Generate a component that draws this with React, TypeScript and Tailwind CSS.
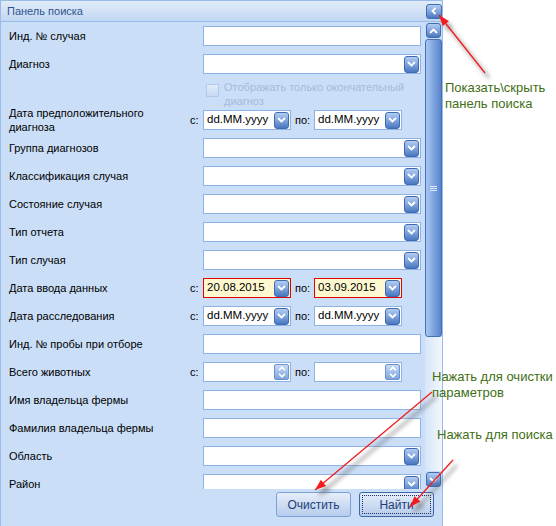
import type { ReactNode } from 'react';

const ChevronDown = () => (
  <svg width="9" height="6" viewBox="0 0 9 6">
    <polyline points="1,1 4.5,4.5 8,1" fill="none" stroke="white" strokeWidth="1.8" />
  </svg>
);

const ChevronUp = () => (
  <svg width="9" height="6" viewBox="0 0 9 6">
    <polyline points="1,5 4.5,1.5 8,5" fill="none" stroke="white" strokeWidth="1.8" />
  </svg>
);

function BlueBtn({ children, h = 'h-[17px]' }: { children: ReactNode; h?: string }) {
  return (
    <span
      className={`w-[15px] ${h} shrink-0 rounded-[3px] border border-[#3e6bb2] bg-linear-to-b from-[#b3cdf1] via-[#7fa4dd] to-[#4a77c0] flex items-center justify-center`}
    >
      {children}
    </span>
  );
}

function Spinner() {
  return (
    <span className="w-[15px] h-[16px] shrink-0 rounded-[2px] border border-[#6d93cf] bg-linear-to-b from-[#c9dcf6] to-[#7ea3db] flex flex-col items-center justify-around">
      <svg width="8" height="5" viewBox="0 0 8 5">
        <polyline points="1,4.2 4,1.2 7,4.2" fill="none" stroke="white" strokeWidth="1.6" />
      </svg>
      <svg width="8" height="5" viewBox="0 0 8 5">
        <polyline points="1,0.8 4,3.8 7,0.8" fill="none" stroke="white" strokeWidth="1.6" />
      </svg>
    </span>
  );
}

function Field({
  w,
  text,
  combo,
  spin,
  red,
}: {
  w: string;
  text?: string;
  combo?: boolean;
  spin?: boolean;
  red?: boolean;
}) {
  return (
    <div
      className={`${w} h-[20px] shrink-0 flex items-center justify-between pl-[3px] pr-[1px] border ${
        red ? 'border-[#e30000] bg-[#fdf8cf]' : 'border-[#8fb2e4] bg-white'
      }`}
    >
      <span className="text-[11.5px] text-black">{text}</span>
      {combo && <BlueBtn><ChevronDown /></BlueBtn>}
      {spin && <Spinner />}
    </div>
  );
}

function Row({ label, from, children }: { label: ReactNode; from?: boolean; children: ReactNode }) {
  return (
    <div className="h-[28px] shrink-0 flex items-center">
      <div className="w-[189px] pl-[8px] leading-[14px]">{label}</div>
      <div className="w-[13px]">{from ? 'с:' : ''}</div>
      {children}
    </div>
  );
}

function Range({ a, b, red, spin }: { a?: string; b?: string; red?: boolean; spin?: boolean }) {
  return (
    <>
      <Field w="w-[88px]" text={a} combo={!spin} spin={spin} red={red} />
      <div className="w-[23px] pl-[4px]">по:</div>
      <Field w="w-[88px]" text={b} combo={!spin} spin={spin} red={red} />
    </>
  );
}

function head(x1: number, y1: number, x2: number, y2: number) {
  const a = Math.atan2(y2 - y1, x2 - x1);
  const l = 11;
  const hw = 4;
  const bx = x2 - l * Math.cos(a);
  const by = y2 - l * Math.sin(a);
  const px = -Math.sin(a) * hw;
  const py = Math.cos(a) * hw;
  return `${x2},${y2} ${bx + px},${by + py} ${bx - px},${by - py}`;
}

const arrows = [
  [485, 73, 439, 15],
  [432, 392, 315, 490],
  [453, 460, 410, 507],
];

export default function App() {
  return (
    <div className="relative w-[556px] h-[526px] bg-white overflow-hidden font-['Liberation_Sans',Arial,sans-serif] text-[11px] text-black">
      <div className="w-[443px] h-[526px] flex flex-col border-l border-r border-t border-[#99bbe8] bg-[#cadef7]">
        {/* header */}
        <div className="h-[21px] shrink-0 flex items-center justify-between pl-[6px] border-b border-[#99bbe8] bg-linear-to-b from-[#e1ebf8] to-[#c2d7f2]">
          <span className="text-[11px] text-[#2f5590]">Панель поиска</span>
          <span className="w-[16px] h-[15px] rounded-[3px] border border-[#3e6bb2] bg-linear-to-b from-[#b3cdf1] via-[#7fa4dd] to-[#4a77c0] flex items-center justify-center">
            <svg width="6" height="8" viewBox="0 0 6 8">
              <polyline points="4.5,1 1.5,4 4.5,7" fill="none" stroke="white" strokeWidth="1.8" />
            </svg>
          </span>
        </div>

        {/* body */}
        <div className="h-[467px] shrink-0 flex">
          <div className="w-[424px] overflow-hidden flex flex-col">
            <Row label="Инд. № случая">
              <Field w="w-[218px]" />
            </Row>
            <Row label="Диагноз">
              <Field w="w-[218px]" combo />
            </Row>
            <div className="h-[28px] shrink-0 flex items-start pt-[6px] pl-[205px]">
              <span className="w-[13px] h-[13px] shrink-0 border border-[#b2c8e8] bg-linear-to-b from-[#e2ecfa] to-[#c6d9f3] rounded-[1px]" />
              <span className="ml-[5px] -mt-[4px] leading-[14px] text-[#a6bad6]">
                Отображать только окончательный
                <br />
                диагноз
              </span>
            </div>
            <Row
              from
              label={
                <>
                  Дата предположительного
                  <br />
                  диагноза
                </>
              }
            >
              <Range a="dd.MM.yyyy" b="dd.MM.yyyy" />
            </Row>
            <Row label="Группа диагнозов">
              <Field w="w-[218px]" combo />
            </Row>
            <Row label="Классификация случая">
              <Field w="w-[218px]" combo />
            </Row>
            <Row label="Состояние случая">
              <Field w="w-[218px]" combo />
            </Row>
            <Row label="Тип отчета">
              <Field w="w-[218px]" combo />
            </Row>
            <Row label="Тип случая">
              <Field w="w-[218px]" combo />
            </Row>
            <Row from label="Дата ввода данных">
              <Range a="20.08.2015" b="03.09.2015" red />
            </Row>
            <Row from label="Дата расследования">
              <Range a="dd.MM.yyyy" b="dd.MM.yyyy" />
            </Row>
            <Row label="Инд. № пробы при отборе">
              <Field w="w-[218px]" />
            </Row>
            <Row from label="Всего животных">
              <Range spin />
            </Row>
            <Row label="Имя владельца фермы">
              <Field w="w-[218px]" />
            </Row>
            <Row label="Фамилия владельца фермы">
              <Field w="w-[218px]" />
            </Row>
            <Row label="Область">
              <Field w="w-[218px]" combo />
            </Row>
            <Row label="Район">
              <Field w="w-[218px]" combo />
            </Row>
          </div>

          {/* scrollbar */}
          <div className="w-[17px] flex flex-col">
            <div className="h-[17px] shrink-0 flex items-center justify-center">
              <BlueBtn h="h-[15px]">
                <ChevronUp />
              </BlueBtn>
            </div>
            <div className="h-[298px] shrink-0 rounded-[3px] border border-[#4470b6] bg-linear-to-r from-[#a9c6f0] via-[#7fa5e0] to-[#5a85cb] flex items-center justify-center">
              <div className="flex flex-col gap-[1px]">
                <span className="w-[7px] h-[1px] bg-[#dfe9f8]" />
                <span className="w-[7px] h-[1px] bg-[#dfe9f8]" />
                <span className="w-[7px] h-[1px] bg-[#dfe9f8]" />
              </div>
            </div>
            <div className="flex-1 bg-linear-to-r from-[#d6e5f8] to-[#f3f7fd]" />
            <div className="h-[18px] shrink-0 flex items-start justify-center pt-[1px]">
              <BlueBtn h="h-[15px]">
                <ChevronDown />
              </BlueBtn>
            </div>
          </div>
        </div>

        {/* footer */}
        <div className="flex-1 flex justify-end gap-[8px] pt-[3px] pr-[8px]">
          <button className="w-[75px] h-[25px] rounded-[3px] border border-[#7e9fd3] bg-linear-to-b from-[#e6eef9] to-[#b6ccec] text-[12px] text-[#1d3f78]">
            Очистить
          </button>
          <button className="w-[75px] h-[25px] rounded-[3px] border border-[#3d66a8] bg-linear-to-b from-[#e6eef9] to-[#b6ccec] p-[2px] text-[12px] text-[#1d3f78]">
            <span className="w-full h-full flex items-center justify-center border border-dotted border-[#1d3160]">
              Найти
            </span>
          </button>
        </div>
      </div>

      {/* annotations */}
      <div className="absolute left-[445px] top-[80px] text-[13px] leading-[16px] text-[#3f6f14]">
        Показать\скрыть
        <br />
        панель поиска
      </div>
      <div className="absolute left-[432px] top-[369px] text-[13px] leading-[16px] text-[#3f6f14]">
        Нажать для очистки
        <br />
        параметров
      </div>
      <div className="absolute left-[437px] top-[427px] text-[13px] leading-[16px] text-[#3f6f14]">
        Нажать для поиска
      </div>

      <svg className="absolute inset-0 pointer-events-none" width="556" height="526">
        <defs>
          <filter id="blur" x="-20%" y="-20%" width="140%" height="140%">
            <feGaussianBlur stdDeviation="2.2" />
          </filter>
        </defs>
        {arrows.map(([x1, y1, x2, y2], i) => (
          <g key={i}>
            <g filter="url(#blur)" opacity="0.55" transform="translate(4,5)">
              <line x1={x1} y1={y1} x2={x2} y2={y2} stroke="#555" strokeWidth="2.5" />
              <polygon points={head(x1, y1, x2, y2)} fill="#555" />
            </g>
            <line x1={x1} y1={y1} x2={x2} y2={y2} stroke="#f21c1c" strokeWidth="1.3" />
            <polygon points={head(x1, y1, x2, y2)} fill="#f21c1c" />
          </g>
        ))}
      </svg>
    </div>
  );
}
